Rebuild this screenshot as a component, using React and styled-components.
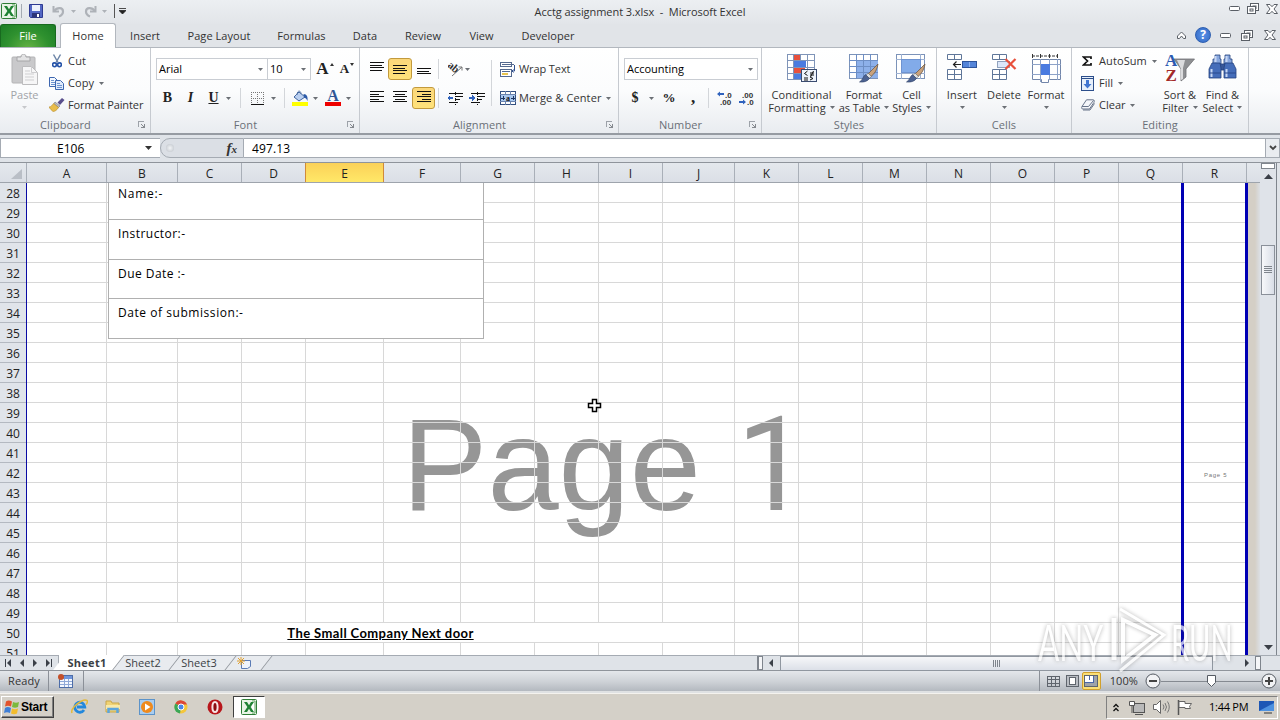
import styled, { createGlobalStyle } from 'styled-components'

const COLUMNS = [
    ['A', 80], ['B', 71], ['C', 64], ['D', 64], ['E', 78], ['F', 77], ['G', 74], ['H', 64], ['I', 64],
    ['J', 72], ['K', 64], ['L', 64], ['M', 64], ['N', 64], ['O', 64], ['P', 64], ['Q', 64], ['R', 64]
]
const ROWS = Array.from({ length: 24 }, (_, i) => 28 + i)
const MERGED_ROW = 50

const TABS = [
    ['Home', 56], ['Insert', 58], ['Page Layout', 90], ['Formulas', 75],
    ['Data', 52], ['Review', 64], ['View', 53], ['Developer', 80]
]

const GlobalStyle = createGlobalStyle`
    *{
        box-sizing: border-box;
    }
    body{
        margin: 0;
        overflow: hidden;
        font-family: 'Open Sans', 'Noto Sans', sans-serif;
        font-size: 11px;
        color: #333;
    }
    svg{
        display: block;
        flex: none;
    }
`

/* ---------- icons ---------- */

const ExcelIcon = ({ size = 16 }) => (
    <svg width={size} height={size} viewBox="0 0 16 16">
        <rect x="0.5" y="0.5" width="15" height="15" rx="1" fill="#e9f4e6" stroke="#2f7d36" />
        <path d="M11 2h3v12h-3" fill="#fff" stroke="#5da35f" />
        <path d="M3 3h3l2 3.3L10 3h3L9.6 8 13 13H10L8 9.8 6 13H3l3.400-5z" fill="#1f8233" />
    </svg>
)

const SaveIcon = () => (
    <svg width="14" height="14" viewBox="0 0 14 14">
        <path d="M0.500 0.500h13v13h-12l-1-1z" fill="#5367c4" stroke="#2e3a92" />
        <rect x="3" y="1" width="8" height="6" fill="#eef2fc" />
        <rect x="3" y="9" width="8" height="4.500" fill="#2c3479" />
        <rect x="8" y="10" width="2" height="3" fill="#fff" />
    </svg>
)

const UndoIcon = ({ flip }) => (
    <svg width="13" height="13" viewBox="0 0 13 13">
        <g transform={flip ? 'translate(13 0) scale(-1 1)' : undefined} fill="none" stroke="#aeb2b8">
            <path d="M1.500 1v5.500H7" strokeWidth="2" />
            <path d="M2 6C5 2 11 2 11 6.500c0 2.500-1.500 4-4 5" strokeWidth="2.200" />
        </g>
    </svg>
)

const Arrow = ({ color = '#6b6f75' }) => (
    <svg width="5" height="3" viewBox="0 0 5 3"><path d="M0 0h5L2.500 3z" fill={color} /></svg>
)

const PasteIcon = () => (
    <svg width="28" height="32" viewBox="0 0 28 32">
        <rect x="1" y="3" width="23" height="26" rx="1" fill="#c9c9cb" stroke="#b4b4b6" />
        <path d="M6 7V3h4c0-4 5-4 5 0h4v4z" fill="#e3e3e4" stroke="#a5a5a7" />
        <path d="M11.500 12.500h9l6 6v12h-15z" fill="#f6f6f7" stroke="#bcbcbe" />
        <path d="M20.500 12.500v6h6M14 17h5M14 20h9M14 23h9M14 26h9" fill="none" stroke="#cfcfd1" />
    </svg>
)

const CutIcon = () => (
    <svg width="10" height="14" viewBox="0 0 10 14">
        <path d="M1.500 0.500l4.500 8M8.500 0.500L4 8.500" stroke="#6e86a8" strokeWidth="1.500" fill="none" />
        <circle cx="2.500" cy="10.800" r="1.900" fill="none" stroke="#2553a8" strokeWidth="1.600" />
        <circle cx="7.500" cy="10.800" r="1.900" fill="none" stroke="#2553a8" strokeWidth="1.600" />
    </svg>
)

const CopyIcon = () => (
    <svg width="15" height="13" viewBox="0 0 15 13">
        <path d="M0.500 0.500h5l3 3v6h-8z" fill="#f3f8ff" stroke="#3d67b0" />
        <path d="M2 3.500h3M2 5.500h4M2 7.500h4" stroke="#6c93d0" />
        <path d="M6.500 3.500h5l3 3v6h-8z" fill="#dfeafb" stroke="#3d67b0" />
        <path d="M8 6.500h3M8 8.500h5M8 10.500h5" stroke="#6c93d0" />
    </svg>
)

const PainterIcon = () => (
    <svg width="16" height="14" viewBox="0 0 16 14">
        <path d="M8.500 4.500L13 0l2.500 2-4.500 5z" fill="#594f8c" />
        <path d="M6 4l5 4-1.500 1.500L5 5.500z" fill="#b8bac4" stroke="#777" strokeWidth="0.600" />
        <path d="M4.500 5.500l5 4C8 12 6 13.500 4 13.500 2.500 12 1 11 0 9c2 0 3-1.500 4.500-3.500z" fill="#e9bd4c" stroke="#b58a26" strokeWidth="0.600" />
    </svg>
)

const Launcher = () => (
    <svg width="7" height="7" viewBox="0 0 7 7" shapeRendering="crispEdges">
        <path d="M0 0.500h6M0.500 0v6" stroke="#9da2a9" />
        <path d="M3 3l3 3M6.500 3v4M3 6.500h4" stroke="#85898f" fill="none" />
    </svg>
)

const BordersIcon = () => (
    <svg width="14" height="13" viewBox="0 0 14 13" shapeRendering="crispEdges">
        <path d="M0 0.500h13M0 6.500h13M0.500 0v12M6.500 0v12M12.500 0v12" stroke="#777" strokeDasharray="1 1" />
        <path d="M0 12.500h13" stroke="#111" />
    </svg>
)

const BucketIcon = () => (
    <svg width="17" height="16" viewBox="0 0 17 16">
        <path d="M7 2l6 5-6 4-5-4z" fill="#b9cff0" stroke="#41659f" />
        <path d="M5 5c0-5 4-5 4-1" fill="none" stroke="#5878a9" />
        <path d="M11.500 4c3.500 0 4.500 3 4 7-1-2.500-2-3-3.500-3.500z" fill="#2c5aa8" />
        <rect x="0" y="12" width="16" height="4" fill="#ffff00" />
    </svg>
)

const Lines = ({ widths, align = 'left', top = 0 }) => (
    <svg width="14" height="14" viewBox="0 0 14 14" shapeRendering="crispEdges">
        {widths.map((w, i) => {
            const x = align === 'left' ? 0 : align === 'right' ? 14 - w : (14 - w) / 2
            return <rect key={i} x={x} y={top + i * 2.5} width={w} height="1" fill="#111" />
        })}
    </svg>
)

const OrientIcon = () => (
    <svg width="16" height="15" viewBox="0 0 16 15">
        <path d="M4 14L14 5M10.500 5H14v3.500" fill="none" stroke="#777" />
        <text x="-1" y="8" transform="rotate(40 4 6)" fontSize="11" fontWeight="700" fontFamily="Liberation Serif, serif" fill="#333">ab</text>
    </svg>
)

const IndentIcon = ({ right }) => (
    <svg width="16" height="13" viewBox="0 0 16 13" shapeRendering="crispEdges">
        <path d="M2 1.500h14M8 4.500h8M8 7.500h5M2 10.500h9" stroke="#111" strokeWidth="1.500" />
        <path d="M8 0v13" stroke="#111" strokeDasharray="1 1" />
        <path d={right ? 'M0 5h3V3l3 3-3 3V7H0z' : 'M6 5H3V3L0 6l3 3V7h3z'} fill="#2f62bd" />
    </svg>
)

const WrapIcon = () => (
    <svg width="16" height="15" viewBox="0 0 16 15">
        <rect x="0.500" y="0.500" width="11" height="4" fill="#fff" stroke="#54698f" />
        <path d="M2 2.500h12" stroke="#54698f" />
        <rect x="0.500" y="7.500" width="11" height="7" fill="#fff" stroke="#54698f" />
        <path d="M2 9.500h8" stroke="#54698f" /><path d="M2 12h6" stroke="#e8c450" strokeWidth="2" />
        <path d="M14.500 3v6h-2M13.500 7.500L12 9l1.500 1.500" fill="none" stroke="#2f4f8f" />
    </svg>
)

const MergeIcon = () => (
    <svg width="16" height="14" viewBox="0 0 16 14" shapeRendering="crispEdges">
        <rect x="0.500" y="0.500" width="15" height="13" fill="#fff" stroke="#324f80" />
        <path d="M0 3.500h16M0 10.500h16M5.500 0v4M10.500 0v4M5.500 10v4M10.500 10v4" stroke="#6a83ad" />
        <rect x="1" y="4" width="14" height="6" fill="#a9c8ef" />
        <path d="M1 7h4M15 7h-4M3 5v4M13 5v4" stroke="#1b3360" />
        <text x="6" y="9.500" fontSize="8" fontWeight="700" fill="#111" fontFamily="Liberation Serif, serif">a</text>
    </svg>
)

const DecimalIcon = ({ more }) => (
    <svg width="17" height="15" viewBox="0 0 17 15">
        <g fontSize="8" fontWeight="700" fill="#333" fontFamily="Liberation Sans, sans-serif">
            <text x={more ? 8 : 3} y="6.500">{more ? '.0' : '.00'}</text>
            <text x={more ? 3 : 8} y="14">{more ? '.00' : '.0'}</text>
        </g>
        <path d={more ? 'M0 3l3-2.500V2h4v2H3v1.500z' : 'M7 11L4 8.500V10H0v2h4v1.500z'} fill="#2f62bd" />
    </svg>
)

const Brush = () => (
    <>
        <path d="M29 10L19 20l3 2.500c4-3 6-7 7-12.500z" fill="#c9a27c" stroke="#6e5a48" strokeWidth="0.800" />
        <path d="M19 19l3.500 3.500-2.500 2-3-3z" fill="#ddd" stroke="#666" strokeWidth="0.600" />
        <path d="M16.500 20.500l4 4c-2 3-6 4-10 3.500 3-1.500 3-5 6-7.500z" fill="#4c6291" stroke="#2d3f66" strokeWidth="0.600" />
    </>
)

const CondIcon = () => (
    <svg width="31" height="29" viewBox="0 0 31 29">
        <rect x="1.500" y="0.500" width="27" height="25" fill="#fff" stroke="#7f94b8" />
        <rect x="8" y="1" width="7" height="6" fill="#e8503c" />
        <rect x="8" y="7" width="12" height="6" fill="#4a7be0" />
        <rect x="8" y="13" width="11" height="6" fill="#e8503c" />
        <rect x="8" y="19" width="7" height="6" fill="#4a7be0" />
        <path d="M1 6.500h28M1 13.500h28M1 19.500h28M7.500 0v26M14.500 0v7M21.500 0v26" stroke="#7f94b8" fill="none" />
        <rect x="15.500" y="15.500" width="15" height="12" fill="#eef3fb" stroke="#3a4c70" />
        <path d="M21.500 17l-3 2.500 3 2M18 24h4M18 26h4M24 19h4M24 21h4M24 23l3 1.500-3 1.500M27.500 17l-3 6" stroke="#111" fill="none" />
    </svg>
)

const TableIcon = () => (
    <svg width="31" height="29" viewBox="0 0 31 29">
        <rect x="0.500" y="0.500" width="28" height="24" fill="#fff" stroke="#7c93b9" />
        <rect x="7" y="6" width="22" height="18" fill="#8db0ea" />
        <path d="M0 6.500h29M0 12.500h29M0 18.500h29M7.500 0v25M14.500 0v25M21.500 0v25" stroke="#6d8ec5" fill="none" />
        <Brush />
    </svg>
)

const StylesIcon = () => (
    <svg width="31" height="29" viewBox="0 0 31 29">
        <rect x="0.500" y="0.500" width="28" height="24" fill="#fff" stroke="#7c93b9" />
        <path d="M0 5.500h29M0 19.500h29M5.500 0v25M24.500 0v25" stroke="#9db1d2" fill="none" />
        <rect x="5.500" y="5.500" width="19" height="13" fill="#82abe9" stroke="#6e93d1" />
        <Brush />
    </svg>
)

const InsertIcon = () => (
    <svg width="31" height="27" viewBox="0 0 31 27">
        <path d="M0.500 0.500h14v5h-14zM7.500 0v6M0.500 15.500h14v10h-14zM0.500 20.500h14M7.500 15v11" fill="#fff" stroke="#5f7699" />
        <rect x="15.500" y="7.500" width="14" height="6" fill="#5585d9" stroke="#2e549b" />
        <path d="M22.500 8v5" stroke="#8cafed" />
        <path d="M14 10.500H6M9.500 7.500l-3 3 3 3" fill="none" stroke="#222" strokeWidth="1.200" />
    </svg>
)

const DeleteIcon = () => (
    <svg width="25" height="27" viewBox="0 0 25 27">
        <path d="M0.500 0.500h14v5h-14zM7.500 0v6M0.500 15.500h14v10h-14zM0.500 20.500h14M7.500 15v11" fill="#fff" stroke="#5f7699" />
        <rect x="5.500" y="7.500" width="12" height="6" fill="#dce7fa" stroke="#35507e" strokeDasharray="1 1" />
        <path d="M13.500 5l10 10M23.500 5l-10 10" stroke="#e8503c" strokeWidth="2.200" />
    </svg>
)

const FormatIcon = () => (
    <svg width="31" height="30" viewBox="0 0 31 30">
        <path d="M1.500 0v4M26.500 0v4M9.500 0v4M18.500 0v4" stroke="#333" />
        <path d="M1 2h26" stroke="#333" strokeDasharray="3 1" />
        <path d="M1.500 5.500h28v20h-12v3h-7v-3h-9z" fill="#fff" stroke="#7286aa" />
        <path d="M1 10.500h29M1 20.500h29M9.500 5v23M18.500 5v21M26.500 5v21" stroke="#8ea3c8" />
        <rect x="10" y="10" width="9" height="11" fill="#4a7be0" />
    </svg>
)

const SigmaIcon = () => (
    <svg width="10" height="10" viewBox="0 0 10 10">
        <path d="M9 3V1H1.500L5.500 5 1.500 9H9V7" fill="none" stroke="#111" strokeWidth="1.700" />
    </svg>
)

const FillIcon = () => (
    <svg width="13" height="15" viewBox="0 0 13 15">
        <rect x="0.500" y="0.500" width="12" height="14" fill="#e6effb" stroke="#2c4e8b" />
        <path d="M0 2.500h13" stroke="#2c4e8b" />
        <path d="M5 4h3v4h2.500l-4 4.500-4-4.500H5z" fill="#3f74d1" />
    </svg>
)

const EraserIcon = () => (
    <svg width="14" height="12" viewBox="0 0 14 12">
        <path d="M5.500 0.800h6.500c1.500 0 1.500 1.500 1 2.500L8.500 10H2C0.500 10 0.300 9 1 7.500z" fill="#f4f6fa" stroke="#68748a" />
        <path d="M1 7.500h6.500L12.500 1.500M2 11h7l4.500-6.500" fill="none" stroke="#68748a" />
    </svg>
)

const SortIcon = () => (
    <svg width="30" height="28" viewBox="0 0 30 28">
        <path d="M9 5h20.500L21 15v8l-5 4V15z" fill="#8f9093" stroke="#6f7073" strokeWidth="0.800" />
        <path d="M12 6h8l-2 8v11l-2 1V15z" fill="#dcdcde" />
        <g fontFamily="Liberation Serif, serif" fontWeight="700" fontSize="17">
            <text x="0" y="12" fill="#2c59b0">A</text>
            <text x="0.500" y="27" fill="#a32a2a">Z</text>
        </g>
    </svg>
)

const FindIcon = () => (
    <svg width="29" height="26" viewBox="0 0 29 26">
        <g stroke="#24427f" strokeWidth="0.800">
            <path d="M7 1h5v4h1v5H5V5h2zM17 1h5v4h2v5h-8V5h1z" fill="#88a7de" />
            <rect x="11" y="10" width="7" height="6" fill="#39589a" />
            <path d="M4 9h8l1 5v10H1V15zM17 9h8l3 6v9H16V14z" fill="#456db9" />
        </g>
        <path d="M3.500 15v8M18.500 15v8M7.500 2v6M18.500 2v6" stroke="#c7d7f4" strokeWidth="2" />
        <path d="M1 19h12M16 19h12" stroke="#2b4b8d" />
    </svg>
)

const WinMin = () => (
    <svg width="11" height="5" viewBox="0 0 11 5"><rect x="0.500" y="0.500" width="10" height="4" rx="1" fill="#fff" stroke="#5a5f66" /></svg>
)
const WinRestore = () => (
    <svg width="12" height="11" viewBox="0 0 12 11">
        <g fill="#fff" stroke="#5a5f66">
            <rect x="3.500" y="0.500" width="8" height="7" /><rect x="6" y="3" width="3" height="2.500" />
            <rect x="0.500" y="3.500" width="8" height="7" /><rect x="3" y="6" width="3" height="2" />
        </g>
    </svg>
)
const WinClose = () => (
    <svg width="12" height="10" viewBox="0 0 12 10">
        <path d="M0.500 0.500h3.500L6 2.700 8 0.500h3.500L8 5l3.500 4.500H8L6 7.300 4 9.500H0.500L4 5z" fill="#fff" stroke="#5a5f66" />
    </svg>
)

/* ---------- shared parts ---------- */

const Space = styled.div`
    flex: none;
    width: ${p => p.$w}px;
`
const Text = styled.span`
    flex: none;
    padding-bottom: 2px;
    white-space: pre;
    letter-spacing: ${p => p.$ls || 0}px;
`
const Divider = styled.div`
    flex: none;
    width: 1px;
    height: ${p => p.$h || 20}px;
    background: ${p => p.$color || '#d3d6da'};
`

/* ---------- window frame ---------- */

const Screen = styled.div`
    width: 1280px;
    height: 720px;
    display: flex;
    flex-direction: column;
    position: relative;
    overflow: hidden;
    background: #dfe3e8;
`
const TitleBar = styled.div`
    height: 24px;
    flex: none;
    display: grid;
    grid-template-columns: 320px 1fr 320px;
    align-items: center;
    background: linear-gradient(#eceff2, #e2e5e9);
`
const QuickAccess = styled.div`
    display: flex;
    align-items: center;
    padding: 0 0 2px 1px;
`
const Title = styled.div`
    text-align: center;
    padding-bottom: 2px;
    letter-spacing: -0.06px;
    white-space: pre;
`
const WindowButtons = styled.div`
    display: flex;
    justify-content: flex-end;
    align-items: center;
    gap: 7px;
    padding: 0 2px 7px 0;
`
const TabRow = styled.div`
    height: 24px;
    flex: none;
    display: flex;
    align-items: flex-end;
    background: #e1e4e8;
    border-bottom: 1px solid #b2b7be;
`
const FileTab = styled.div`
    width: 56px;
    height: 23px;
    margin-right: 4px;
    display: flex;
    align-items: center;
    justify-content: center;
    color: #fff;
    border: 1px solid #186a1f;
    border-bottom: 0;
    border-radius: 3px 3px 0 0;
    background: radial-gradient(ellipse at 50% 110%, #66b344 0%, #2f912f 55%, #1b7d26 100%);
`
const Tab = styled.div`
    width: ${p => p.$w}px;
    height: ${p => (p.$active ? 25 : 24)}px;
    margin-bottom: -1px;
    display: flex;
    align-items: center;
    justify-content: center;
    border: 1px solid ${p => (p.$active ? '#b2b7be' : 'transparent')};
    border-bottom: 0;
    border-radius: 3px 3px 0 0;
    background: ${p => (p.$active ? '#fff' : 'transparent')};
`
const TabTools = styled.div`
    margin-left: auto;
    height: 24px;
    display: flex;
    align-items: center;
    padding-right: 4px;
`
const Help = styled.div`
    width: 16px;
    height: 16px;
    border-radius: 50%;
    border: 1px solid #2e5fb0;
    background: radial-gradient(#5b93e8, #2f66c2);
    color: #fff;
    font-weight: 700;
    font-size: 12px;
    line-height: 14px;
    text-align: center;
`

/* ---------- ribbon ---------- */

const Ribbon = styled.div`
    height: 87px;
    flex: none;
    display: flex;
    background: linear-gradient(#ffffff 0%, #fbfcfd 50%, #e9ecf0 100%);
    border-bottom: 2px solid #969ba2;
`
const GroupBox = styled.div`
    width: ${p => p.$w}px;
    flex: none;
    display: flex;
    flex-direction: column;
    border-right: 1px solid #c6cad0;
`
const GroupBody = styled.div`
    height: 69px;
    display: flex;
`
const GroupLabel = styled.div`
    height: 15px;
    display: grid;
    grid-template-columns: ${p => (p.$launcher ? '1fr 19px' : '1fr')};
    align-items: center;
    text-align: center;
    color: #6a6f77;
    letter-spacing: 0.1px;
    svg{
        margin-left: 7px;
    }
`
const Stack = styled.div`
    display: flex;
    flex-direction: column;
    gap: ${p => p.$gap || 0}px;
    padding-top: ${p => p.$top || 0}px;
    padding-left: ${p => p.$left || 0}px;
`
const Line = styled.div`
    height: 22px;
    display: flex;
    align-items: center;
`
const Slot = styled.div`
    width: ${p => p.$w}px;
    height: 22px;
    flex: none;
    display: flex;
    align-items: center;
    justify-content: center;
    border-radius: 3px;
    border: 1px solid ${p => (p.$on ? '#c29a3d' : 'transparent')};
    background: ${p => (p.$on ? 'linear-gradient(#fbd77a, #ffe27a)' : 'transparent')};
`
const Glyph = styled.span`
    font-family: 'Liberation Serif', serif;
    font-weight: 700;
    font-size: ${p => p.$size || 14}px;
    color: ${p => p.$color || '#222'};
    font-style: ${p => (p.$italic ? 'italic' : 'normal')};
    text-decoration: ${p => (p.$underline ? 'underline' : 'none')};
`
const GrowMark = styled.span`
    align-self: flex-start;
    margin: 4px 0 0 1px;
    border: 2px solid transparent;
    border-top: ${p => (p.$down ? '3px solid #333' : 0)};
    border-bottom: ${p => (p.$down ? 0 : '3px solid #333')};
`
const FontColor = styled.div`
    width: 16px;
    height: 16px;
    border-bottom: 4px solid #ee0000;
    text-align: center;
    line-height: 12px;
`
const Combo = styled.div`
    width: ${p => p.$w}px;
    height: 22px;
    margin-left: ${p => (p.$joined ? -1 : 0)}px;
    display: flex;
    align-items: center;
    justify-content: space-between;
    padding: 0 4px 0 2px;
    color: #000;
    background: #fff;
    border: 1px solid #c9cdd3;
`
const BigButton = styled.div`
    width: ${p => p.$w}px;
    display: flex;
    flex-direction: column;
    align-items: center;
    padding-top: 6px;
    color: ${p => (p.$off ? '#a0a3a8' : '#333')};
`
const BigPicture = styled.div`
    height: 34px;
`
const BigText = styled.div`
    height: 13px;
    line-height: 13px;
    display: flex;
    align-items: center;
    gap: 4px;
    white-space: pre;
    letter-spacing: ${p => p.$ls || 0}px;
`

const Group = ({ w, label, launcher, children }) => (
    <GroupBox $w={w}>
        <GroupBody>{children}</GroupBody>
        <GroupLabel $launcher={launcher}><span>{label}</span>{launcher && <Launcher />}</GroupLabel>
    </GroupBox>
)

const Big = ({ w, icon, lines, ls = 0, off }) => (
    <BigButton $w={w} $off={off}>
        <BigPicture>{icon}</BigPicture>
        <BigText $ls={ls}>{lines[0]}</BigText>
        <BigText $ls={ls}>{lines[1]}<Arrow color={off ? '#c6c8cb' : undefined} /></BigText>
    </BigButton>
)

/* ---------- formula bar ---------- */

const FormulaBar = styled.div`
    height: 28px;
    flex: none;
    display: flex;
    padding: 3px 0 4px;
    background: #dfe3e8;
    border-bottom: 1px solid #8f949b;
    font-size: 12px;
    color: #000;
`
const NameBox = styled.div`
    width: 160px;
    display: flex;
    align-items: center;
    background: #fff;
    border: 1px solid #a5abb3;
    border-right: 0;
    font-size: 12px;
`
const FxArea = styled.div`
    width: 84px;
    display: flex;
    align-items: center;
    justify-content: space-between;
    padding: 0 6px 0 5px;
    background: #dbdfe5;
    border: 1px solid #a5abb3;
    border-radius: 11px 0 0 11px;
    font: italic 700 15px 'Liberation Serif', serif;
    color: #333;
    small{
        font-size: 11px;
    }
`
const Knob = styled.div`
    width: 8px;
    height: 8px;
    border-radius: 50%;
    background: radial-gradient(#f2f4f6, #bcc1c8);
`
const FormulaText = styled.div`
    flex: 1;
    display: flex;
    align-items: center;
    padding-left: 8px;
    background: #fff;
    border-top: 1px solid #a5abb3;
    border-bottom: 1px solid #a5abb3;
    letter-spacing: 0.15px;
`
const Expand = styled.div`
    width: 15px;
    display: flex;
    align-items: center;
    justify-content: center;
    background: #e9ecf0;
    border: 1px solid #a5abb3;
`

/* ---------- sheet ---------- */

const Work = styled.div`
    height: 492px;
    flex: none;
    display: flex;
`
const SheetSide = styled.div`
    width: 1260px;
    display: flex;
    flex-direction: column;
`
const ColumnHeads = styled.div`
    height: 20px;
    flex: none;
    display: flex;
    background: linear-gradient(#e4e8ed, #dbdfe6);
    border-bottom: 1px solid #9ea4ac;
`
const ColumnHead = styled.div`
    width: ${p => p.$w}px;
    flex: none;
    padding-top: 2px;
    text-align: center;
    font-size: 12px;
    line-height: 17px;
    color: #222;
    border-right: 1px solid ${p => (p.$active ? '#d08a3a' : '#a9afb8')};
    box-shadow: ${p => (p.$active ? '-1px 0 0 #d08a3a' : 'none')};
    background: ${p => (p.$active ? 'linear-gradient(#fbd158, #ffe868)' : 'none')};
`
const Corner = styled.div`
    width: 27px;
    flex: none;
    padding: 6px 0 0 11px;
    border-right: 1px solid #a9afb8;
`
const Grid = styled.div`
    flex: 1;
    min-height: 0;
    display: flex;
    position: relative;
    overflow: hidden;
    background: linear-gradient(90deg, #d4cfc6 0 1255px, #dbdfe4 1260px);
`
const RowHeads = styled.div`
    width: 27px;
    flex: none;
    background: #e0e4ea;
    border-right: 1px solid #0a0aa4;
`
const RowHead = styled.div`
    height: 20px;
    text-align: center;
    font-size: 12px;
    line-height: 22px;
    color: #222;
    border-bottom: 1px solid #b4b9c1;
`
const Cells = styled.div`
    width: 1221px;
    flex: none;
    position: relative;
    background: #fff;
    border-right: 3px solid #0000b4;
`
const CellRow = styled.div`
    height: 20px;
    display: flex;
    position: relative;
    z-index: 1;
    border-bottom: 1px solid #d8d8d8;
`
const Cell = styled.div`
    width: ${p => p.$w}px;
    height: 20px;
    flex: none;
    border-right: ${p => (p.$pageBreak ? '3px solid #0000b4' : '1px solid #d8d8d8')};
`
const MergedCell = styled(Cell)`
    text-align: center;
    font: 700 13px/20px Lato, sans-serif;
    color: #000;
    text-decoration: underline;
    letter-spacing: 0.4px;
`
const PageMark = styled.div`
    position: absolute;
    left: 375px;
    top: 209px;
    font: 128px/147px 'Liberation Sans', Arial, sans-serif;
    color: #969696;
    white-space: pre;
    transform: scaleY(1.035);
    transform-origin: 0 116px;
    span{
        font-family: Roboto, sans-serif;
    }
`
const SmallPageMark = styled.div`
    position: absolute;
    left: 1177px;
    top: 287px;
    font: 6px/10px 'Liberation Sans', Arial, sans-serif;
    letter-spacing: 0.7px;
    color: #777;
    white-space: pre;
`
const TextBox = styled.div`
    position: absolute;
    z-index: 2;
    left: 81px;
    top: 0;
    width: 376px;
    height: 156px;
    background: #fff;
    border: 1px solid #b0b0b0;
    border-top: 0;
`
const Field = styled.div`
    height: ${p => p.$h}px;
    padding: ${p => p.$top}px 0 0 9px;
    font-size: 12px;
    line-height: 18px;
    color: #000;
    border-bottom: ${p => (p.$last ? 0 : 1)}px solid #b0b0b0;
    letter-spacing: ${p => p.$ls}px;
`
const Pointer = styled.div`
    position: absolute;
    z-index: 3;
    left: 560px;
    top: 215px;
`
const VScroll = styled.div`
    width: 17px;
    display: flex;
    flex-direction: column;
    align-items: center;
    background: #dfe3e9;
    border-right: 1px solid #7f858d;
`
const SplitV = styled.div`
    width: 14px;
    height: 6px;
    margin-bottom: 5px;
    background: #fff;
    border: 1px solid #7f858d;
`
const ThumbV = styled.div`
    width: 14px;
    height: 50px;
    margin: 66px 0 auto;
    display: flex;
    align-items: center;
    justify-content: center;
    border: 1px solid #8a9099;
    background: linear-gradient(90deg, #f7f8fa, #d9dee7);
`

/* ---------- sheet tabs, status bar ---------- */

const SheetBar = styled.div`
    height: 16px;
    flex: none;
    display: flex;
    align-items: center;
    background: #dfe3e8;
    border-top: 1px solid #a5abb3;
    border-bottom: 1px solid #8f949b;
`
const SheetNav = styled.div`
    width: 59px;
    height: 14px;
    display: flex;
    align-items: center;
    justify-content: space-between;
    padding: 0 6px 0 5px;
    border-right: 1px solid #a5abb3;
`
const SheetTab = styled.div`
    width: ${p => p.$w}px;
    height: 15px;
    position: relative;
    z-index: ${p => p.$z};
    display: flex;
    align-items: center;
    justify-content: center;
    font-weight: ${p => (p.$active ? 700 : 400)};
    color: #3b3f45;
    &::before{
        content: '';
        position: absolute;
        z-index: -1;
        inset: ${p => (p.$active ? '-1px' : '0')} -4px 1px ${p => (p.$active ? '0' : '-6px')};
        background: ${p => (p.$active ? '#fff' : '#e8ebef')};
        border-right: 1px solid #8f949b;
        transform: skewX(-38deg);
        transform-origin: 50% 50%;
    }
    &::after{
        content: '';
        display: ${p => (p.$active ? 'block' : 'none')};
        position: absolute;
        z-index: -1;
        inset: -1px 20px 1px 0;
        background: #fff;
    }
`
const SplitH = styled.div`
    width: 6px;
    height: 14px;
    background: #f5f6f8;
    border: 1px solid #7f858d;
    border-left-width: ${p => (p.$last ? 1 : 2)}px;
`
const ThumbH = styled.div`
    width: 433px;
    height: 15px;
    display: flex;
    align-items: center;
    justify-content: center;
    border: 1px solid #9097a0;
    background: linear-gradient(#f6f7f9, #dce0e8);
`
const StatusBar = styled.div`
    height: 22px;
    flex: none;
    display: flex;
    align-items: center;
    padding-bottom: 2px;
    background: linear-gradient(#e4e7eb 0%, #cdd1d6 50%, #b4b9c0 90%, #dfe1e3 91%);
    color: #333;
`
const ViewButton = styled.div`
    width: 19px;
    height: 18px;
    display: flex;
    align-items: center;
    justify-content: center;
    border-radius: 2px;
    border: 1px solid ${p => (p.$on ? '#d1a02c' : 'transparent')};
    background: ${p => (p.$on ? '#fbdf76' : 'transparent')};
`
const ZoomTrack = styled.div`
    width: 100px;
    height: 12px;
    display: flex;
    align-items: center;
    padding-left: 46px;
    background: linear-gradient(#858a91, #858a91) 0 50% / 100% 1px no-repeat;
`

/* ---------- taskbar ---------- */

const Taskbar = styled.div`
    height: 27px;
    flex: none;
    display: flex;
    align-items: center;
    background: #d4d0c8;
    border-top: 1px solid #f4f2ee;
`
const Start = styled.div`
    width: 53px;
    height: 22px;
    margin-left: 1px;
    display: flex;
    align-items: center;
    gap: 1px;
    padding-left: 2px;
    font: 700 12px 'Liberation Sans', Arial, sans-serif;
    letter-spacing: -0.2px;
    color: #000;
    border: 1px solid;
    border-color: #fff #404040 #404040 #fff;
    box-shadow: inset -1px -1px 0 #808080;
`
const TaskIcon = styled.div`
    width: 32px;
    height: 22px;
    margin-left: ${p => p.$ml || 0}px;
    display: flex;
    align-items: center;
    justify-content: center;
    border: 1px solid;
    border-color: ${p => (p.$on ? '#404040 #fff #fff #404040' : 'transparent')};
    background: ${p => (p.$on ? '#fff' : 'transparent')};
`
const Tray = styled.div`
    width: 172px;
    height: 23px;
    margin: 0 2px 0 auto;
    display: flex;
    align-items: center;
    color: #000;
    border: 1px solid;
    border-color: #808080 #fff #fff #808080;
`

const Watermark = styled.div`
    position: absolute;
    z-index: 9;
    left: 1038px;
    top: 606px;
    width: 200px;
    height: 68px;
    display: flex;
    align-items: center;
    filter: drop-shadow(0 0 2px rgba(80, 80, 80, 0.6));
    opacity: 0.7;
`
const Brand = styled.span`
    width: ${p => p.$w}px;
    flex: none;
    font: 400 50px/60px Lato, sans-serif;
    padding-top: 3px;
    color: #fff;
    transform: scaleX(${p => p.$scale});
    transform-origin: 0 50%;
`

const Tri = ({ dir, bar }) => (
    <svg width="7" height="8" viewBox="0 0 7 8">
        <g transform={dir === 'left' ? undefined : 'translate(7 0) scale(-1 1)'} fill="#3b4048">
            <path d="M6 0v8L2 4z" />
            {bar && <rect x="0" y="0" width="1" height="8" />}
        </g>
    </svg>
)

function RibbonPanel() {
    return (
        <Ribbon>
            <Group w={151} label="Clipboard" launcher>
                <Big w={49} off icon={<PasteIcon />} lines={['Paste', '']} />
                <Stack $top={2}>
                    <Line><Space $w={3} /><CutIcon /><Space $w={6} /><Text $ls={0.2}>Cut</Text></Line>
                    <Line><CopyIcon /><Space $w={4} /><Text $ls={0.1}>Copy</Text><Space $w={5} /><Arrow /></Line>
                    <Line><PainterIcon /><Space $w={3} /><Text $ls={-0.1}>Format Painter</Text></Line>
                </Stack>
            </Group>
            <Group w={209} label="Font" launcher>
                <Stack $top={10} $gap={7} $left={5}>
                    <Line>
                        <Combo $w={112}><Text>Arial</Text><Arrow /></Combo>
                        <Combo $w={44} $joined><Text>10</Text><Arrow /></Combo>
                        <Space $w={3} />
                        <Slot $w={22}><Glyph $size={17}>A</Glyph><GrowMark /></Slot>
                        <Slot $w={22}><Glyph $size={13}>A</Glyph><GrowMark $down /></Slot>
                    </Line>
                    <Line>
                        <Slot $w={23}><Glyph>B</Glyph></Slot>
                        <Slot $w={23}><Glyph $italic>I</Glyph></Slot>
                        <Slot $w={23}><Glyph $underline>U</Glyph></Slot>
                        <Space $w={1} /><Arrow /><Space $w={9} /><Divider /><Space $w={10} />
                        <BordersIcon /><Space $w={6} /><Arrow /><Space $w={8} /><Divider /><Space $w={7} />
                        <BucketIcon /><Space $w={4} /><Arrow /><Space $w={7} />
                        <FontColor><Glyph $size={16} $color="#2f5596">A</Glyph></FontColor>
                        <Space $w={5} /><Arrow />
                    </Line>
                </Stack>
            </Group>
            <Group w={259} label="Alignment" launcher>
                <Stack $top={10} $gap={7} $left={5}>
                    <Line>
                        <Slot $w={23}><Lines widths={[14, 12, 14, 12]} top={0} /></Slot>
                        <Slot $w={24} $on><Lines widths={[14, 12, 14, 12]} top={3} /></Slot>
                        <Slot $w={23}><Lines widths={[14, 12, 14, 12]} top={6} /></Slot>
                        <Space $w={3} /><Divider /><Space $w={9} />
                        <OrientIcon /><Space $w={1} /><Arrow />
                    </Line>
                    <Line>
                        <Slot $w={23}><Lines widths={[14, 9, 14, 9, 14]} /></Slot>
                        <Slot $w={24}><Lines widths={[14, 10, 14, 10, 14]} align="center" /></Slot>
                        <Slot $w={23} $on><Lines widths={[14, 9, 14, 9, 14]} align="right" /></Slot>
                        <Space $w={3} /><Divider /><Space $w={8} />
                        <IndentIcon /><Space $w={6} /><IndentIcon right />
                    </Line>
                </Stack>
                <Stack $top={12} $left={6}><Divider $h={46} /></Stack>
                <Stack $top={10} $gap={7} $left={8}>
                    <Line><WrapIcon /><Space $w={3} /><Text $ls={-0.1}>Wrap Text</Text></Line>
                    <Line><MergeIcon /><Space $w={3} /><Text $ls={0.12}>Merge &amp; Center</Text><Space $w={4} /><Arrow /></Line>
                </Stack>
            </Group>
            <Group w={143} label="Number" launcher>
                <Stack $top={10} $gap={7} $left={5}>
                    <Line><Combo $w={134}><Text>Accounting</Text><Arrow /></Combo></Line>
                    <Line>
                        <Slot $w={22}><Glyph>$</Glyph></Slot><Space $w={3} /><Arrow /><Space $w={3} />
                        <Slot $w={24}><Glyph $size={13}>%</Glyph></Slot>
                        <Slot $w={24}><Glyph $size={17}>,</Glyph></Slot>
                        <Space $w={3} /><Divider /><Space $w={8} />
                        <DecimalIcon more /><Space $w={5} /><DecimalIcon />
                    </Line>
                </Stack>
            </Group>
            <Group w={175} label="Styles">
                <Big w={79} icon={<CondIcon />} lines={['Conditional', 'Formatting']} ls={0.12} />
                <Big w={46} icon={<TableIcon />} lines={['Format', 'as Table']} ls={-0.1} />
                <Big w={49} icon={<StylesIcon />} lines={['Cell', 'Styles']} />
            </Group>
            <Group w={135} label="Cells">
                <Space $w={4} />
                <Big w={42} icon={<InsertIcon />} lines={['Insert', '']} ls={0.1} />
                <Big w={42} icon={<DeleteIcon />} lines={['Delete', '']} ls={0.1} />
                <Big w={42} icon={<FormatIcon />} lines={['Format', '']} />
            </Group>
            <Group w={177} label="Editing">
                <Stack $top={2} $left={9}>
                    <Line><Space $w={1} /><SigmaIcon /><Space $w={7} /><Text $ls={0.1}>AutoSum</Text><Space $w={5} /><Arrow /></Line>
                    <Line><FillIcon /><Space $w={5} /><Text>Fill</Text><Space $w={5} /><Arrow /></Line>
                    <Line><EraserIcon /><Space $w={4} /><Text>Clear</Text><Space $w={4} /><Arrow /></Line>
                </Stack>
                <Space $w={2} />
                <Big w={42} icon={<SortIcon />} lines={['Sort &', 'Filter']} ls={0.1} />
                <Big w={43} icon={<FindIcon />} lines={['Find &', 'Select']} ls={0.1} />
            </Group>
        </Ribbon>
    )
}

function Sheet() {
    return (
        <Work>
            <SheetSide>
                <ColumnHeads>
                    <Corner><svg width="11" height="10"><path d="M11 0v10H0z" fill="#b9bec6" /></svg></Corner>
                    {COLUMNS.map(([name, w]) => (
                        <ColumnHead key={name} $w={w} $active={name === 'E'}>{name}</ColumnHead>
                    ))}
                </ColumnHeads>
                <Grid>
                    <RowHeads>{ROWS.map(n => <RowHead key={n}>{n}</RowHead>)}</RowHeads>
                    <Cells>
                        <PageMark>Page <span>1</span></PageMark>
                        <SmallPageMark>Page 5</SmallPageMark>
                        {ROWS.map(n => (
                            <CellRow key={n}>
                                {n === MERGED_ROW && <MergedCell $w={708}>The Small Company Next door</MergedCell>}
                                {COLUMNS.slice(n === MERGED_ROW ? 10 : 0, 17).map(([name, w]) => (
                                    <Cell key={name} $w={name === 'Q' ? w + 1 : w} $pageBreak={name === 'Q'} />
                                ))}
                            </CellRow>
                        ))}
                        <TextBox>
                            <Field $h={37} $top={2} $ls={0.75}>Name:-</Field>
                            <Field $h={40} $top={5} $ls={0.45}>Instructor:-</Field>
                            <Field $h={39} $top={5} $ls={0.45}>Due Date :-</Field>
                            <Field $h={39} $top={5} $ls={0.55} $last>Date of submission:-</Field>
                        </TextBox>
                        <Pointer>
                            <svg width="15" height="15" viewBox="0 0 15 15">
                                <path d="M5.500 1.500h4v4h4v4h-4v4h-4v-4h-4v-4h4z" fill="#fff" stroke="#000" strokeWidth="1.500" />
                            </svg>
                        </Pointer>
                    </Cells>
                </Grid>
            </SheetSide>
            <VScroll>
                <SplitV />
                <svg width="9" height="5"><path d="M0 5h9L4.500 0z" fill="#3b4048" /></svg>
                <ThumbV>
                    <svg width="8" height="8" shapeRendering="crispEdges"><path d="M0 0.500h8M0 2.500h8M0 4.500h8M0 6.500h8" stroke="#7f858d" /></svg>
                </ThumbV>
                <svg width="9" height="10"><path d="M0 0h9L4.500 5z" fill="#3b4048" /></svg>
            </VScroll>
        </Work>
    )
}

function SheetTabs() {
    return (
        <SheetBar>
            <SheetNav><Tri dir="left" bar /><Tri dir="left" /><Tri dir="right" /><Tri dir="right" bar /></SheetNav>
            <SheetTab $w={56} $z={4} $active><Text $ls={0.3}>Sheet1</Text></SheetTab>
            <SheetTab $w={56} $z={3}><Text>Sheet2</Text></SheetTab>
            <SheetTab $w={56} $z={2}><Text>Sheet3</Text></SheetTab>
            <SheetTab $w={36} $z={1}>
                <svg width="16" height="13" viewBox="0 0 16 13">
                    <path d="M4.500 3.500h9v6l-3 2h-6z" fill="#eef3fb" stroke="#5a7bb5" />
                    <path d="M4 0v8M0 4h8M1 1l6 6M7 1L1 7" stroke="#e0a030" />
                </svg>
            </SheetTab>
            <Space $w={494} />
            <SplitH /><Space $w={4} /><Tri dir="left" /><Space $w={6} />
            <ThumbH>
                <svg width="8" height="7" shapeRendering="crispEdges"><path d="M0.500 0v7M2.500 0v7M4.500 0v7M6.500 0v7" stroke="#7f858d" /></svg>
            </ThumbH>
            <Space $w={31} /><Tri dir="right" /><Space $w={4} /><SplitH $last />
        </SheetBar>
    )
}

function Status() {
    return (
        <StatusBar>
            <Space $w={8} /><Text $ls={0.1}>Ready</Text><Space $w={8} /><Divider $color="#8b9098" /><Space $w={9} />
            <svg width="15" height="14" viewBox="0 0 15 14">
                <rect x="1.500" y="1.500" width="13" height="12" fill="#f4f8ff" stroke="#4d6da8" />
                <rect x="2" y="2" width="12" height="3" fill="#6f95dc" />
                <path d="M2 7.500h12M2 10.500h12M6.500 5v8M10.500 5v8" stroke="#8fa9d8" />
                <circle cx="3" cy="3" r="3" fill="#c4502a" />
            </svg>
            <Space $w={10} /><Divider $color="#8b9098" />
            <Space $w={955} /><Divider $color="#8b9098" /><Space $w={4} />
            <ViewButton>
                <svg width="13" height="11" shapeRendering="crispEdges"><path d="M0 0.500h13M0 3.500h13M0 7.500h13M0 10.500h13M0.500 0v11M4.500 0v11M8.500 0v11M12.500 0v11" stroke="#5f656d" /></svg>
            </ViewButton>
            <ViewButton>
                <svg width="13" height="12" shapeRendering="crispEdges"><rect x="0.500" y="0.500" width="12" height="11" fill="#b9bdc3" stroke="#5f656d" /><rect x="3.500" y="2.500" width="6" height="7" fill="#fff" stroke="#5f656d" /></svg>
            </ViewButton>
            <ViewButton $on>
                <svg width="14" height="12" shapeRendering="crispEdges"><rect x="0.500" y="0.500" width="13" height="11" fill="#9fa3a9" stroke="#5f656d" /><path d="M1 1h8v6H1z" fill="#fff" /><path d="M5.500 1v4M9.500 1v6.500H1" stroke="#4a67a8" fill="none" /></svg>
            </ViewButton>
            <Space $w={9} /><Text>100%</Text><Space $w={7} />
            <svg width="16" height="16"><circle cx="8" cy="8" r="7" fill="#f1f2f4" stroke="#555b63" /><path d="M4 8h8" stroke="#444" strokeWidth="2" /></svg>
            <ZoomTrack>
                <svg width="9" height="12"><path d="M0.500 0.500h8v7l-4 4-4-4z" fill="#fff" stroke="#555b63" /></svg>
            </ZoomTrack>
            <svg width="16" height="16"><circle cx="8" cy="8" r="7" fill="#f1f2f4" stroke="#555b63" /><path d="M4 8h8M8 4v8" stroke="#444" strokeWidth="2" /></svg>
        </StatusBar>
    )
}

function Tasks() {
    return (
        <Taskbar>
            <Start>
                <svg width="16" height="15" viewBox="0 0 16 15">
                    <path d="M2 1.500c2-1.500 4-1 6 0L7 6.500C5 5.500 3 5.500 1 6.500z" fill="#e2532c" />
                    <path d="M9 2c2 1 4 1 6 0l-1 5c-2 1-4 1-6 0z" fill="#7bb93c" />
                    <path d="M1 8c2-1.500 4-1 6 0l-1 5c-2-1-4-1-6 0z" fill="#3f7fd6" />
                    <path d="M8 8.500c2 1 4 1 6 0l-1 5c-2 1-4 1-6 0z" fill="#f2bc2c" />
                </svg>
                Start
            </Start>
            <TaskIcon $ml={9}>
                <svg width="17" height="16" viewBox="0 0 17 16">
                    <path d="M13 11a5 5 0 1 1 .8-3H6" fill="none" stroke="#2388dc" strokeWidth="2.800" />
                    <path d="M1 14C-1 9 12-1 16 1.500c1 1 0 3-1 4" fill="none" stroke="#e3b93c" strokeWidth="1.500" />
                </svg>
            </TaskIcon>
            <TaskIcon $ml={2}>
                <svg width="16" height="14" viewBox="0 0 16 14">
                    <path d="M1 1h5l1 2h7v9H1z" fill="#f0d375" stroke="#c9a648" />
                    <path d="M1 5h14v4H1z" fill="#f9e9a8" />
                    <path d="M3.500 13V9h9v4" fill="none" stroke="#5ba5dd" strokeWidth="2.500" />
                </svg>
            </TaskIcon>
            <TaskIcon $ml={2}>
                <svg width="16" height="16" viewBox="0 0 16 16">
                    <rect x="0.500" y="0.500" width="15" height="15" fill="#a9cdf0" stroke="#5c93c9" />
                    <circle cx="8" cy="8" r="6" fill="#ef8a1d" /><path d="M6 4.500v7l5.500-3.500z" fill="#fff" />
                </svg>
            </TaskIcon>
            <TaskIcon $ml={2}>
                <svg width="14" height="14" viewBox="0 0 14 14">
                    <circle cx="7" cy="7" r="6.500" fill="#f4c63a" />
                    <path d="M7 7L1.400 3.500A6.500 6.500 0 0 1 13 4.500H7z" fill="#dc4638" />
                    <path d="M7 7L1.400 3.500A6.500 6.500 0 0 0 6 13.500z" fill="#3ba757" />
                    <circle cx="7" cy="7" r="3" fill="#4a86e8" stroke="#fff" />
                </svg>
            </TaskIcon>
            <TaskIcon $ml={2}>
                <svg width="16" height="16" viewBox="0 0 16 16">
                    <circle cx="8" cy="8" r="7.500" fill="#b8161b" /><ellipse cx="8" cy="8" rx="2.600" ry="5" fill="#8d0c10" stroke="#f6e4e4" strokeWidth="2" />
                </svg>
            </TaskIcon>
            <TaskIcon $ml={2} $on><ExcelIcon /></TaskIcon>
            <Tray>
                <Space $w={6} />
                <svg width="6" height="9"><path d="M0.500 4L3 1.500 5.500 4M0.500 8L3 5.500 5.500 8" fill="none" stroke="#111" strokeWidth="1.300" /></svg>
                <Space $w={10} />
                <svg width="16" height="15" viewBox="0 0 16 15">
                    <rect x="4.500" y="3.500" width="11" height="9" fill="#b9b9b9" stroke="#555" />
                    <path d="M6 14.500h8" stroke="#555" /><path d="M0.500 1.500h5v4h-5zM3 5v8" fill="#fff" stroke="#555" />
                </svg>
                <Space $w={8} />
                <svg width="17" height="14" viewBox="0 0 17 14">
                    <path d="M0.500 4.500h3l4-4v13l-4-4h-3z" fill="#fff" stroke="#666" />
                    <path d="M10 4.500q2 2.500 0 5M12 3q3 4 0 8M14.500 1.500q3.500 5.500 0 11" fill="none" stroke="#777" />
                </svg>
                <Space $w={7} />
                <svg width="16" height="15" viewBox="0 0 16 15">
                    <path d="M1.500 0v15" stroke="#555" strokeWidth="1.500" />
                    <path d="M2 1.500h6v2h6.500l-2 3 1 2H8v-1H2z" fill="#fff" stroke="#666" />
                </svg>
                <Space $w={16} /><Text $ls={-0.25}>1:44 PM</Text><Space $w={11} />
                <svg width="15" height="13" viewBox="0 0 15 13">
                    <rect width="15" height="10" fill="#1d57b5" /><path d="M0 10L15 2v8z" fill="#4e92e0" /><path d="M5 12h8" stroke="#333" />
                </svg>
            </Tray>
        </Taskbar>
    )
}

export default function App() {
    return (
        <Screen>
            <GlobalStyle />
            <TitleBar>
                <QuickAccess>
                    <ExcelIcon /><Space $w={4} /><Divider $h={14} $color="#a5abb3" /><Space $w={7} />
                    <SaveIcon /><Space $w={9} /><UndoIcon /><Space $w={6} /><Arrow color="#aeb2b8" /><Space $w={8} />
                    <UndoIcon flip /><Space $w={5} /><Arrow color="#aeb2b8" /><Space $w={7} /><Divider $h={14} $color="#555" /><Space $w={4} />
                    <svg width="7" height="6"><path d="M0 0.500h7M0 2.500h7L3.500 6z" stroke="#222" strokeWidth="0.800" fill="#222" /></svg>
                </QuickAccess>
                <Title>Acctg assignment 3.xlsx  -  Microsoft Excel</Title>
                <WindowButtons><WinMin /><WinRestore /><WinClose /></WindowButtons>
            </TitleBar>
            <TabRow>
                <FileTab><Text>File</Text></FileTab>
                {TABS.map(([name, w]) => (
                    <Tab key={name} $w={w} $active={name === 'Home'}><Text $ls={0.05}>{name}</Text></Tab>
                ))}
                <TabTools>
                    <svg width="9" height="8"><path d="M0.500 5L4.500 1l4 4v2.500h-2L4.500 5l-2 2.500h-2z" fill="#fff" stroke="#5a5f66" /></svg>
                    <Space $w={9} /><Help>?</Help><Space $w={9} /><WinMin /><Space $w={10} /><WinRestore /><Space $w={11} /><WinClose />
                </TabTools>
            </TabRow>
            <RibbonPanel />
            <FormulaBar>
                <NameBox><Space $w={56} />E106<Space $w={61} /><svg width="7" height="4"><path d="M0 0h7L3.500 4z" fill="#333" /></svg></NameBox>
                <FxArea><Knob /><span>f<small>x</small></span></FxArea>
                <FormulaText>497.13</FormulaText>
                <Expand><svg width="8" height="6"><path d="M1 1l3 3 3-3" fill="none" stroke="#444" strokeWidth="1.800" /></svg></Expand>
            </FormulaBar>
            <Sheet />
            <SheetTabs />
            <Status />
            <Tasks />
            <Watermark>
                <Brand $w={71} $scale={0.63}>ANY</Brand>
                <svg width="62" height="68" viewBox="0 0 62 68" fill="none" stroke="#fff">
                    <path d="M5 12v42" strokeWidth="5" />
                    <path d="M14 14v40l32-25z" strokeWidth="4" />
                    <path d="M11 3l44 26-44 36" strokeWidth="3" />
                </svg>
                <Brand $w={60} $scale={0.58}>RUN</Brand>
            </Watermark>
        </Screen>
    )
}
